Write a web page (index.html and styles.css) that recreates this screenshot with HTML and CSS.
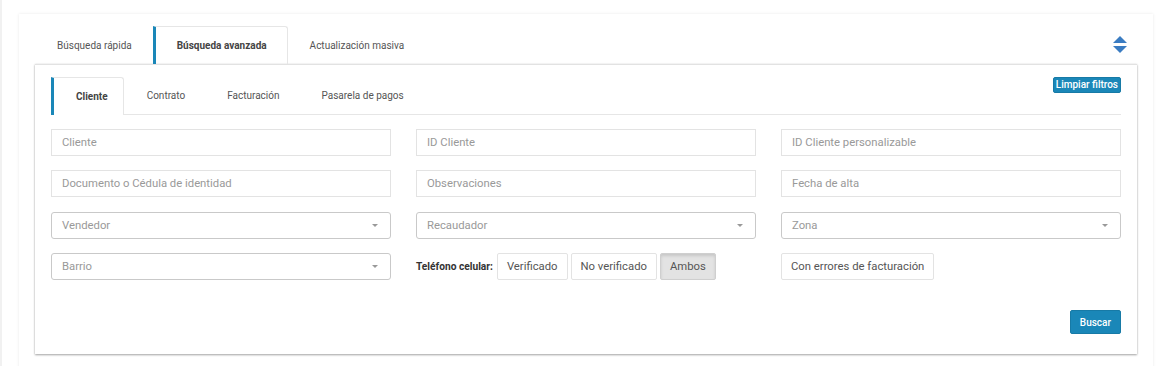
FILE: index.html
```html
<!DOCTYPE html>
<html lang="es">
  <head>
    <meta charset="UTF-8" />
    <meta name="viewport" content="width=device-width, initial-scale=1.0" />
    <title>Búsqueda avanzada</title>
    <link rel="stylesheet" href="styles.css">
  </head>
  <body>
    <div class="page">
      <div class="panel">
        <div class="top-bar">
          <div class="tabs">
            <div class="tab">Búsqueda rápida</div>
            <div class="tab active">Búsqueda avanzada</div>
            <div class="tab">Actualización masiva</div>
          </div>
          <svg class="toggle" width="14" height="18" viewBox="0 0 14 18">
            <path d="M7 0 L14 7 L0 7 Z" fill="#3a7cc2" />
            <path d="M0 10 L14 10 L7 17 Z" fill="#3a7cc2" />
          </svg>
        </div>

        <div class="box">
          <div class="sub-bar">
            <div class="sub-tab active">Cliente</div>
            <div class="sub-tab">Contrato</div>
            <div class="sub-tab">Facturación</div>
            <div class="sub-tab">Pasarela de pagos</div>
            <button class="btn-blue clear">Limpiar filtros</button>
          </div>

          <div class="fields">
            <div class="input">Cliente</div>
            <div class="input">ID Cliente</div>
            <div class="input">ID Cliente personalizable</div>

            <div class="input">Documento o Cédula de identidad</div>
            <div class="input">Observaciones</div>
            <div class="input">Fecha de alta</div>

            <div class="select">Vendedor<span class="caret"></span></div>
            <div class="select">Recaudador<span class="caret"></span></div>
            <div class="select">Zona<span class="caret"></span></div>

            <div class="select">Barrio<span class="caret"></span></div>
            <div class="phone">
              <span class="label">Teléfono celular:</span>
              <button class="opt">Verificado</button>
              <button class="opt">No verificado</button>
              <button class="opt on">Ambos</button>
            </div>
            <div><button class="opt">Con errores de facturación</button></div>
          </div>

          <div class="actions">
            <button class="btn-blue search">Buscar</button>
          </div>
        </div>
      </div>
    </div>
  </body>
</html>
```

FILE: styles.css
```css
body {
  margin: 0;
  padding: 0;
  background: #fff;
  font-family: Roboto, "Noto Sans", sans-serif;
  color: #555;
}
.page {
  height: 366px;
  overflow: hidden;
  border-left: 2px solid #f1f1f1;
  padding: 14px 15px 0 17px;
}
.panel {
  background: #fff;
  box-shadow: 0 0 3px rgba(0, 0, 0, 0.09);
  padding: 12px 16px 20px 16px;
}
.top-bar {
  display: flex;
  align-items: center;
  justify-content: space-between;
}
.tabs {
  display: flex;
}
.tab {
  height: 38px;
  box-sizing: border-box;
  display: flex;
  align-items: center;
  padding: 0 21px 0 22px;
  font-size: 10px;
  color: #555;
}
.tab.active {
  border: 1px solid #e6e6e6;
  border-left: 3px solid #1a87b8;
  border-bottom: none;
  border-top-right-radius: 3px;
  font-weight: 700;
  color: #444;
  padding: 0 20px 0 21px;
}
.toggle {
  margin-right: 10px;
}
.box {
  background: #fff;
  border-top: 1px solid #e2e2e2;
  box-shadow: 0 1px 2px rgba(0, 0, 0, 0.35), 0 0 2px rgba(0, 0, 0, 0.08);
  padding: 12px 16px 20px 16px;
}
.sub-bar {
  display: flex;
  align-items: flex-start;
  border-bottom: 1px solid #e6e6e6;
}
.sub-tab {
  height: 37px;
  box-sizing: border-box;
  display: flex;
  align-items: center;
  padding: 0 21px;
  font-size: 10px;
  color: #555;
}
.sub-tab.active {
  border: 1px solid #e6e6e6;
  border-left: 3px solid #1a87b8;
  border-bottom: none;
  border-top-right-radius: 3px;
  margin-bottom: -1px;
  margin-right: 2px;
  height: 38px;
  background: #fff;
  font-weight: 700;
  color: #444;
  padding: 0 15px 0 22px;
}
.btn-blue {
  background: #1a87b8;
  color: #fff;
  border: 1px solid #177aa6;
  border-radius: 2px;
  font-family: Roboto, "Noto Sans", sans-serif;
  cursor: pointer;
}
.clear {
  margin-left: auto;
  height: 16px;
  padding: 0 2px;
  font-size: 10px;
  font-weight: 500;
  line-height: 14px;
}
.fields {
  display: grid;
  grid-template-columns: repeat(3, 340px);
  grid-template-rows: 27px 27px 27px 27px;
  column-gap: 25px;
  row-gap: 14px;
  margin-top: 14px;
}
.input,
.select {
  height: 27px;
  box-sizing: border-box;
  border: 1px solid #e3e3e3;
  padding: 0 10px;
  display: flex;
  align-items: center;
  font-size: 11.3px;
  color: #999;
}
.select {
  border-color: #c9c9c9;
  border-radius: 3px;
  justify-content: space-between;
  margin-top: 1px;
}
.phone,
.phone + div {
  margin-top: 1px;
}
.caret {
  width: 0;
  height: 0;
  border-left: 3px solid transparent;
  border-right: 3px solid transparent;
  border-top: 3px solid #999;
  margin-right: 2px;
}
.phone {
  display: flex;
  align-items: center;
  gap: 3px;
}
.label {
  font-size: 10.2px;
  font-weight: 700;
  color: #333;
  margin-right: 1px;
}
.opt {
  height: 27px;
  box-sizing: border-box;
  padding: 0 9px;
  background: #fff;
  border: 1px solid #e3e3e3;
  border-radius: 2px;
  font-family: Roboto, "Noto Sans", sans-serif;
  font-size: 11.3px;
  color: #555;
  cursor: pointer;
}
.opt.on {
  background: #e3e3e3;
  border-color: #cfcfcf;
  box-shadow: inset 0 2px 3px rgba(0, 0, 0, 0.12);
}
.actions {
  display: flex;
  justify-content: flex-end;
  margin-top: 31px;
}
.search {
  height: 24px;
  padding: 0 9px;
  font-size: 10px;
  font-weight: 500;
}
```
